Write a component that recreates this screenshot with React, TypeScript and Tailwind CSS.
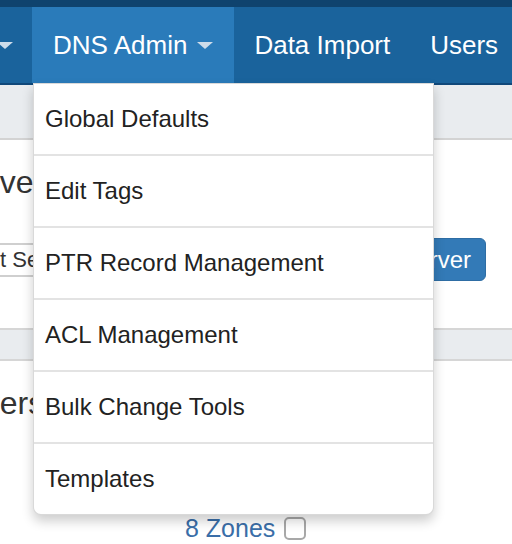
const menuItems = [
  'Global Defaults',
  'Edit Tags',
  'PTR Record Management',
  'ACL Management',
  'Bulk Change Tools',
  'Templates',
]

const Caret = ({ className = '' }: { className?: string }) => (
  <span
    className={`inline-block w-0 h-0 border-l-[8px] border-r-[8px] border-t-[7px] border-l-transparent border-r-transparent border-t-[#cddcea] ${className}`}
  />
)

export default function App() {
  return (
    <div className="relative w-[512px] h-[544px] overflow-hidden bg-white font-['Liberation_Sans',Arial,sans-serif] text-[#333]">
      {/* top strip + navbar */}
      <div className="h-[7px] bg-[#0f436e]" />
      <nav className="flex h-[78px] bg-[#1a639c] border-b-2 border-[#10487a] text-white text-[26px] whitespace-nowrap">
        <div className="flex items-center w-[32px] shrink-0">
          <Caret className="-ml-[3px]" />
        </div>
        <div className="flex items-center gap-[10px] px-[21px] bg-[#2a7bba] shrink-0">
          <span>DNS Admin</span>
          <Caret />
        </div>
        <div className="flex items-center px-[20px] shrink-0">Data Import</div>
        <div className="flex items-center px-[20px] shrink-0">Users</div>
      </nav>

      {/* page body */}
      <div className="h-[55px] bg-[#e9ecef] border-b-2 border-[#d3d3d3]" />
      <div className="pt-[25px]">
        <h2 className="text-[32px] leading-[35px] -ml-[50px] whitespace-nowrap">Servers</h2>
        <div className="flex items-center justify-between mt-[38px] pr-[26px]">
          <div className="h-[34px] w-[200px] flex items-center border-y-2 border-[#cfcfcf] text-[22px] -ml-[55px] whitespace-nowrap">
            Select Server
          </div>
          <button className="h-[43px] px-[14px] rounded-[6px] bg-[#337ab7] border border-[#2e6da4] text-white text-[24px] whitespace-nowrap">
            Add Server
          </button>
        </div>
      </div>
      <div className="mt-[47px] h-[33px] bg-[#e9ecef] border-y-2 border-[#d6d6d6]" />
      <div className="pt-[25px]">
        <h2 className="text-[32px] leading-[35px] -ml-[66px] whitespace-nowrap">Servers</h2>
        <div className="flex items-center gap-[9px] pl-[185px] mt-[93px]">
          <a className="text-[25px] leading-[28px] text-[#3a6ea8]">8 Zones</a>
          <span className="w-[22px] h-[23px] rounded-[5px] border-2 border-[#a8a8a8] bg-white" />
        </div>
      </div>

      {/* DNS Admin dropdown */}
      <div className="absolute left-[33px] top-[83px] w-[401px] bg-white border border-black/15 rounded-b-[8px] shadow-[0_6px_12px_rgba(0,0,0,0.2)]">
        {menuItems.map((item, i) => (
          <div key={item}>
            {i > 0 && <div className="h-[2px] bg-[#e3e3e3]" />}
            <div className="flex items-center h-[70px] pl-[11px] pb-[1px] text-[24px] text-[#222]">
              {item}
            </div>
          </div>
        ))}
      </div>
    </div>
  )
}
